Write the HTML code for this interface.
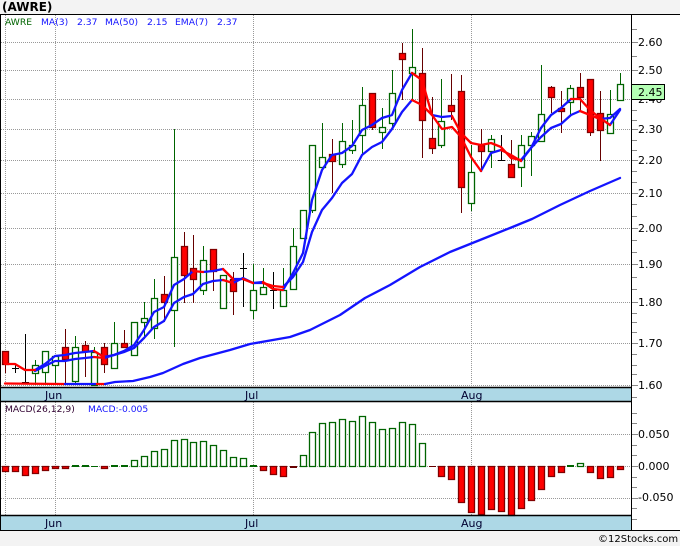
<!DOCTYPE html>
<html><head><meta charset="utf-8"><style>
html,body{margin:0;padding:0;background:#f3f3f3}
svg{display:block;font-family:"DejaVu Sans",sans-serif}
</style></head><body>
<svg width="680" height="546" viewBox="0 0 680 546" xmlns="http://www.w3.org/2000/svg">
<rect width="680" height="546" fill="#f3f3f3"/>
<rect x="0" y="14" width="680" height="516" fill="#fff"/>
<rect x="1" y="388" width="631" height="13" fill="#add8e6"/>
<rect x="1" y="516" width="631" height="14" fill="#add8e6"/>
<text x="2" y="11" font-size="12" font-weight="bold" fill="#000">(AWRE)</text>
<!-- grid -->
<path d="M1 42.5H632M1 70.5H632M1 99.5H632M1 129.5H632M1 160.5H632M1 193.5H632M1 228.5H632M1 264.5H632M1 302.5H632M1 343.5H632M1 385.5H632M1 434.5H632M1 466.5H632M1 498.5H632M5.5 15V387M55.5 15V387M253.5 15V387M471.5 15V387M5.5 402V515M55.5 402V515M253.5 402V515M471.5 402V515" stroke="#999" stroke-width="1" stroke-dasharray="1 1" fill="none"/>
<!-- wicks -->
<path d="M35.5 360V385M45.5 351V385M55.5 356V385M75.5 336V385M94.5 347V385M114.5 322V368M144.5 302V339M154.5 279V339M174.5 129V347M203.5 246V295M253.5 264V319M263.5 268V294M283.5 268V306M293.5 228V289M312.5 145V213M322.5 123V167M342.5 123V168M352.5 120V154M362.5 87V155M382.5 108V149M392.5 70V128M412.5 29V100M441.5 79V148M471.5 145V211M491.5 135V168M521.5 135V187M531.5 132V176M541.5 65V141M570.5 85V115M610.5 90V133M620.5 73V100" stroke="#006400" fill="none"/>
<path d="M5.5 351V373M65.5 329V385M85.5 341V377M104.5 343V373M124.5 330V347M164.5 276V322M184.5 232V303M193.5 235V303M213.5 249V291M233.5 272V315M332.5 139V193M372.5 93V130M402.5 43V100M422.5 48V158M432.5 97V154M451.5 74V120M461.5 75V213M481.5 129V172M511.5 140V177M551.5 86V113M561.5 91V133M580.5 73V110M590.5 79V136M600.5 91V161" stroke="#660000" fill="none"/>
<path d="M15.5 364V373M12 368.5H19M25.5 334V382M22 382.5H29M243.5 253V307M240 268.5H247M273.5 272V309M270 290.5H277M501.5 135V160M498 160.5H505" stroke="#000" fill="none"/>
<!-- bodies green -->
<path stroke-width="1.3" d="M32.5 365.5h6v8h-6zM42.5 351.5h6v21h-6zM52.5 356.5h6v9h-6zM72.5 347.5h6v34h-6zM91.5 352.5h6v33h-6zM111.5 343.5h6v25h-6zM131.5 322.5h6v33h-6zM141.5 318.5h6v4h-6zM151.5 298.5h6v30h-6zM171.5 257.5h6v53h-6zM200.5 260.5h6v30h-6zM220.5 275.5h6v33h-6zM250.5 290.5h6v20h-6zM260.5 287.5h6v7h-6zM280.5 290.5h6v16h-6zM290.5 246.5h6v43h-6zM300.5 210.5h6v28h-6zM309.5 145.5h6v65h-6zM319.5 157.5h6v10h-6zM339.5 141.5h6v23h-6zM349.5 145.5h6v5h-6zM359.5 105.5h6v30h-6zM379.5 127.5h6v5h-6zM389.5 93.5h6v30h-6zM409.5 67.5h6v6h-6zM438.5 121.5h6v24h-6zM468.5 172.5h6v31h-6zM488.5 139.5h6v12h-6zM518.5 145.5h6v22h-6zM528.5 136.5h6v9h-6zM538.5 114.5h6v27h-6zM567.5 88.5h6v14h-6zM607.5 114.5h6v19h-6zM617.5 84.5h6v16h-6z" fill="#fff" stroke="#006400"/>
<!-- bodies red -->
<path stroke-width="1.3" d="M2.5 351.5h6v13h-6zM62.5 347.5h6v12h-6zM82.5 345.5h6v6h-6zM101.5 347.5h6v17h-6zM121.5 343.5h6v4h-6zM161.5 294.5h6v8h-6zM181.5 246.5h6v29h-6zM190.5 268.5h6v11h-6zM210.5 249.5h6v22h-6zM230.5 279.5h6v12h-6zM329.5 154.5h6v7h-6zM369.5 93.5h6v34h-6zM399.5 53.5h6v6h-6zM419.5 73.5h6v47h-6zM429.5 138.5h6v10h-6zM448.5 105.5h6v6h-6zM458.5 91.5h6v96h-6zM478.5 145.5h6v6h-6zM508.5 164.5h6v13h-6zM548.5 87.5h6v10h-6zM558.5 108.5h6v3h-6zM577.5 87.5h6v10h-6zM587.5 79.5h6v53h-6zM597.5 113.5h6v17h-6z" fill="#f00" stroke="#800000"/>
<!-- MAs -->
<g fill="none" stroke-width="2.3" stroke-linejoin="round" stroke-linecap="round">
<path stroke="#f00" d="M5 383.5L65 384M95 384L105 384"/>
<path stroke="#1414ff" d="M65 384L95 384M105 384L115 382 133 381 150 377 163 373 183 364 200 358 230 350 250 344 290 337 310 330 340 315 365 298 390 285 420 267 450 252 480 240 510 228 532 219 560 205 590 191 620 178"/>
<path stroke="#1414ff" d="M35 371L45 366 55 361 65 361 75 359 85 358 94 357M104 358L114 355 124 352 134 348 144 338 154 327 164 321 174 303 184 297 193 294 203 284 213 281 223 280M233 283L243 278 253 283 263 283M283 287L293 277 303 262 312 232 322 210 332 198 342 183 352 174 362 155 372 147 382 142 392 129 402 112 412 100M432 115L442 117 452 116M521 160L531 148 541 137 551 128 561 124 571 115 580 111M600 119L610 118 620 109"/>
<path stroke="#1414ff" d="M35 370L45 364 55 356 65 355 75 353 85 352 94 351M104 357L114 355 124 351 134 345 144 330 154 312 164 307 174 285 184 279 193 271M203 272L213 271 223 269M233 279L243 279M253 283L263 282M283 290L293 273 303 253 312 200 322 170 332 155 342 153 352 146 362 130 372 125 382 118 392 115 402 90 412 73M481 171L491 153 501 150M521 161L531 148 541 128 551 115 561 108 571 99M610 125L620 110"/>
<path stroke="#f00" d="M94 357L104 358M223 280L233 283M263 283L273 286 283 287M412 100L422 105 432 115M452 116L461 133 471 143 481 145 491 143 501 147 511 158 521 160M580 111L590 115 600 119"/>
<path stroke="#f00" d="M5 364L15 364 25 370 35 370M94 351L104 357M193 271L203 272M223 269L233 279M243 279L253 283M263 282L273 289 283 290M412 73L422 80 432 115 442 129 452 127 461 137 471 157 481 171M501 150L511 155 521 161M571 99L580 99 590 110 600 118 610 125"/>
</g>
<!-- MACD bars green -->
<path stroke-width="1.3" d="M131.5 460.5h6v6h-6zM141.5 456.5h6v10h-6zM151.5 451.5h6v15h-6zM161.5 449.5h6v17h-6zM171.5 440.5h6v26h-6zM181.5 439.5h6v27h-6zM190.5 442.5h6v24h-6zM200.5 441.5h6v25h-6zM210.5 445.5h6v21h-6zM220.5 450.5h6v16h-6zM230.5 457.5h6v9h-6zM240.5 458.5h6v8h-6zM300.5 455.5h6v11h-6zM309.5 432.5h6v34h-6zM319.5 423.5h6v43h-6zM329.5 422.5h6v44h-6zM339.5 419.5h6v47h-6zM349.5 421.5h6v45h-6zM359.5 416.5h6v50h-6zM369.5 422.5h6v44h-6zM379.5 429.5h6v37h-6zM389.5 428.5h6v38h-6zM399.5 422.5h6v44h-6zM409.5 424.5h6v42h-6zM419.5 443.5h6v23h-6zM577.5 463.5h6v3h-6z" fill="#fff" stroke="#006400"/>
<path d="M72 465h7v2h-7zM82 465h7v2h-7zM91 466h7v1h-7zM111 465h7v2h-7zM121 465h7v2h-7zM250 465h7v2h-7zM567 465h7v2h-7z" fill="#006400"/>
<path stroke-width="1.3" d="M2.5 466.5h6v5h-6zM12.5 466.5h6v5h-6zM22.5 466.5h6v9h-6zM32.5 466.5h6v7h-6zM42.5 466.5h6v4h-6zM52.5 466.5h6v2h-6zM62.5 466.5h6v2h-6zM101.5 466.5h6v2h-6zM260.5 466.5h6v4h-6zM270.5 466.5h6v8h-6zM280.5 466.5h6v10h-6zM438.5 466.5h6v10h-6zM448.5 466.5h6v13h-6zM458.5 466.5h6v36h-6zM468.5 466.5h6v46h-6zM478.5 466.5h6v48h-6zM488.5 466.5h6v43h-6zM498.5 466.5h6v45h-6zM508.5 466.5h6v49h-6zM518.5 466.5h6v42h-6zM528.5 466.5h6v34h-6zM538.5 466.5h6v23h-6zM548.5 466.5h6v10h-6zM558.5 466.5h6v6h-6zM587.5 466.5h6v6h-6zM597.5 466.5h6v12h-6zM607.5 466.5h6v11h-6zM617.5 466.5h6v3h-6z" fill="#f00" stroke="#800000"/>
<path d="M290 466h7v2h-7zM429 466h7v1h-7z" fill="#660000"/>
<!-- frame -->
<path d="M0 14.5H680M0 530.5H680M0.5 14V530M631.5 14V530" stroke="#000" fill="none"/>
<path d="M1 387.5H632M1 401.5H632M1 515.5H632" stroke="#000" stroke-width="1.4" fill="none"/>
<!-- ticks -->
<path d="M632 29.5h5M632 42.5h6M632 56.5h5M632 70.5h6M632 84.5h5M632 99.5h6M632 110.5h5M632 120.5h5M632 129.5h6M632 140.5h5M632 150.5h5M632 160.5h6M632 171.5h5M632 182.5h5M632 193.5h6M632 204.5h5M632 216.5h5M632 228.5h6M632 240.5h5M632 252.5h5M632 264.5h6M632 277.5h5M632 289.5h5M632 302.5h6M632 313.5h5M632 322.5h5M632 332.5h5M632 343.5h6M632 354.5h5M632 365.5h5M632 374.5h5M632 385.5h6M632 397.5h5M632 413.5h5M632 423.5h5M632 434.5h6M632 445.5h5M632 455.5h5M632 466.5h6M632 477.5h5M632 487.5h5M632 498.5h6M632 508.5h5M632 519.5h5" stroke="#888" fill="none"/>
<!-- axis labels -->
<g font-size="11" fill="#000">
<text x="638" y="46">2.60</text><text x="638" y="74">2.50</text><text x="638" y="103">2.40</text><text x="638" y="133">2.30</text><text x="638" y="164">2.20</text><text x="638" y="197">2.10</text><text x="638" y="232">2.00</text><text x="638" y="268">1.90</text><text x="638" y="306">1.80</text><text x="638" y="347">1.70</text><text x="638" y="389">1.60</text>
<text x="638" y="438">0.050</text><text x="638" y="470">0.000</text><text x="638" y="501">-0.050</text>
</g>
<rect x="631.5" y="84.5" width="33" height="15" fill="#b4ffb4" stroke="#000"/>
<text x="638" y="96" font-size="11" fill="#000">2.45</text>
<!-- legends -->
<g font-size="9.2" fill="#1414ff">
<text x="5" y="25" fill="#006400">AWRE</text>
<text x="41" y="25">MA(3)</text><text x="77" y="25">2.37</text>
<text x="105" y="25">MA(50)</text><text x="147" y="25">2.15</text>
<text x="175" y="25">EMA(7)</text><text x="217" y="25">2.37</text>
<text x="5" y="412" fill="#300030">MACD(26,12,9)</text>
<text x="88" y="412">MACD:-0.005</text>
</g>
<g font-size="11" fill="#000030">
<text x="45" y="399">Jun</text><text x="245" y="399">Jul</text><text x="461" y="399">Aug</text>
<text x="45" y="527">Jun</text><text x="245" y="527">Jul</text><text x="461" y="527">Aug</text>
</g>
<text x="598" y="542" font-size="10" fill="#000">©12Stocks.com</text>
</svg>
</body></html>
